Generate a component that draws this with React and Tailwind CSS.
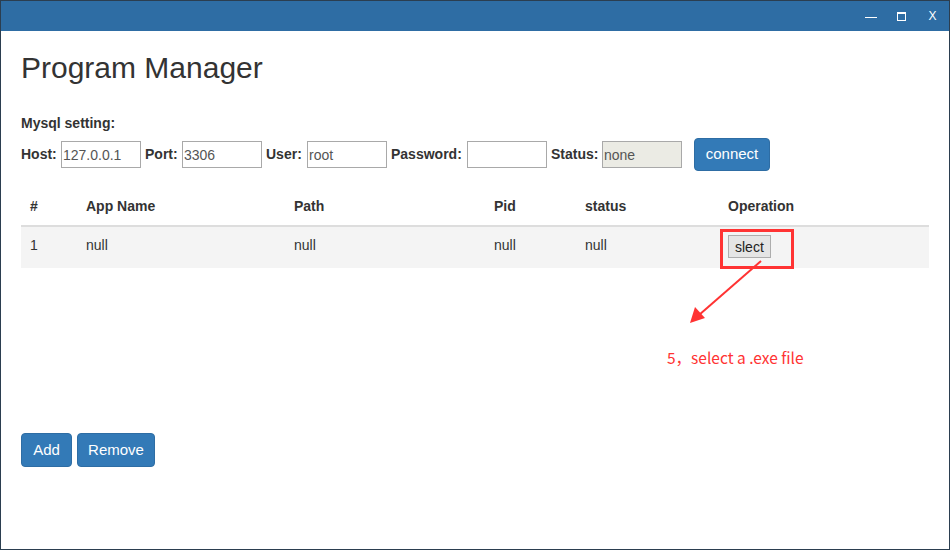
import { useState } from "react";

const font = { fontFamily: '"Liberation Sans", Arial, sans-serif' };

function Field({ label, value, disabled, w }) {
  return (
    <>
      <label className={`font-bold text-[14px] text-[#333] ${w}`}>{label}</label>
      <input
        defaultValue={value}
        readOnly
        className={`w-[80px] h-[27px] border border-[#a9a9a9] px-[1px] text-[14px] text-[#555] outline-none mr-[4px] ${
          disabled ? "bg-[#ebebe4]" : "bg-white"
        }`}
        style={font}
      />
    </>
  );
}

export default function App() {
  const [rows] = useState([{ id: 1, name: "null", path: "null", pid: "null", status: "null" }]);

  return (
    <div className="w-[950px] h-[550px] border border-[#2b3e50] flex flex-col bg-white relative overflow-hidden" style={font}>
      {/* TITLE BAR */}
      <div className="h-[30px] bg-[#2e6da4] flex items-center justify-end shrink-0 text-white pr-[1px]">
        <div className="w-[31px] h-full flex items-center justify-center">
          <div className="w-[12px] h-[1px] bg-white mt-[2px]" />
        </div>
        <div className="w-[31px] h-full flex items-center justify-center">
          <div className="w-[9px] h-[9px] border border-white border-t-2" />
        </div>
        <div className="w-[31px] h-full flex items-center justify-center text-[12px]">X</div>
      </div>

      <div className="px-[20px] flex-1 flex flex-col text-[#333]">
        {/* HEADER */}
        <h1 className="text-[30px] mt-[19px] leading-[36px] text-[#333]">Program Manager</h1>

        {/* MYSQL */}
        <p className="font-bold text-[14px] mt-[27px] leading-[20px]">Mysql setting:</p>
        <div className="flex items-center mt-[5px] h-[33px]">
          <Field label="Host:" value="127.0.0.1" w="w-[40px]" />
          <Field label="Port:" value="3306" w="w-[37px]" />
          <Field label="User:" value="root" w="w-[41px]" />
          <Field label="Password:" value="" w="w-[76px]" />
          <Field label="Status:" value="none" disabled w="w-[51px]" />
          <button className="ml-[8px] w-[76px] h-[33px] bg-[#337ab7] border border-[#2e6da4] rounded-[4px] text-white text-[15px]">
            connect
          </button>
        </div>

        {/* TABLE */}
        <table className="w-[908px] mt-[18px] text-[14px] border-collapse">
          <thead>
            <tr className="border-b-2 border-[#ddd] text-left">
              <th className="w-[57px] pl-[9px] pt-[7px] pb-[8px] font-bold">#</th>
              <th className="w-[208px] pl-[8px] pt-[7px] pb-[8px] font-bold">App Name</th>
              <th className="w-[200px] pl-[8px] pt-[7px] pb-[8px] font-bold">Path</th>
              <th className="w-[91px] pl-[8px] pt-[7px] pb-[8px] font-bold">Pid</th>
              <th className="w-[143px] pl-[8px] pt-[7px] pb-[8px] font-bold">status</th>
              <th className="pl-[8px] pt-[7px] pb-[8px] font-bold">Operation</th>
            </tr>
          </thead>
          <tbody>
            {rows.map((r) => (
              <tr key={r.id} className="bg-[#f4f4f4] h-[42px] align-top">
                <td className="pl-[9px] pt-[8px]">{r.id}</td>
                <td className="pl-[8px] pt-[8px]">{r.name}</td>
                <td className="pl-[8px] pt-[8px]">{r.path}</td>
                <td className="pl-[8px] pt-[8px]">{r.pid}</td>
                <td className="pl-[8px] pt-[8px]">{r.status}</td>
                <td className="pl-[8px] pt-[8px]">
                  <button className="h-[23px] px-[6px] bg-[#e5e5e5] border border-[#adadad] text-[14px] text-[#222] leading-[20px]">
                    slect
                  </button>
                </td>
              </tr>
            ))}
          </tbody>
        </table>

        {/* BUTTONS */}
        <div className="flex gap-[5px] mt-[165px]">
          <button className="w-[51px] h-[34px] bg-[#337ab7] border border-[#2e6da4] rounded-[4px] text-white text-[15px]">Add</button>
          <button className="w-[78px] h-[34px] bg-[#337ab7] border border-[#2e6da4] rounded-[4px] text-white text-[15px]">Remove</button>
        </div>
      </div>

      {/* ANNOTATION */}
      <div className="absolute left-[719px] top-[228px] w-[74px] h-[40px] border-[3px] border-[#f33]" />
      <svg className="absolute left-0 top-0 pointer-events-none" width="950" height="550">
        <line x1="760" y1="260" x2="698" y2="314" stroke="#f33" strokeWidth="2" />
        <polygon points="689,322 694,306 704,317" fill="#f33" />
      </svg>
      <div
        className="absolute left-[666px] top-[345px] text-[15.5px] text-[#f33]"
        style={{ fontFamily: '"Noto Sans CJK SC", "Microsoft YaHei", sans-serif' }}
      >
        5，select a .exe file
      </div>
    </div>
  );
}
